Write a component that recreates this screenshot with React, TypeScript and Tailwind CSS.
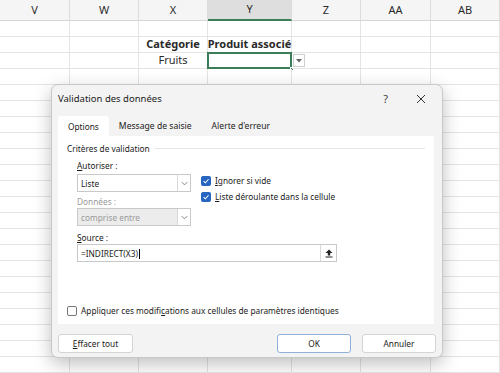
import React from 'react'

const cols = [
  { name: 'V', w: 'w-[70px]' },
  { name: 'W', w: 'w-[69px]' },
  { name: 'X', w: 'w-[69px]' },
  { name: 'Y', w: 'w-[84px]' },
  { name: 'Z', w: 'w-[69px]' },
  { name: 'AA', w: 'w-[70px]' },
  { name: 'AB', w: 'w-[69px]' },
]

function Chevron() {
  return (
    <svg width="9" height="9" viewBox="0 0 10 10" className="text-[#777]">
      <path d="M2 3.5 L5 6.5 L8 3.5" fill="none" stroke="currentColor" strokeWidth="1" />
    </svg>
  )
}

function Check() {
  return (
    <span className="flex h-[10px] w-[10px] shrink-0 items-center justify-center rounded-[2px] bg-[#2766c0]">
      <svg width="8" height="8" viewBox="0 0 10 10">
        <path d="M2 5.2 L4.2 7.3 L8.2 2.8" fill="none" stroke="white" strokeWidth="1.3" />
      </svg>
    </span>
  )
}

function Sheet() {
  const rows = Array.from({ length: 22 })
  return (
    <div className="flex flex-col bg-white text-[11px] text-[#2a2a2a]">
      {/* column headers */}
      <div className="flex h-[21px] bg-[#f5f5f5]">
        {cols.map((c) => (
          <div
            key={c.name}
            className={`${c.w} flex shrink-0 items-center justify-center border-r border-[#dcdcdc] ${
              c.name === 'Y' ? 'border-b-2 border-b-[#3b7d57] bg-[#dedede]' : 'border-b border-b-[#d6d6d6]'
            }`}
          >
            {c.name}
          </div>
        ))}
      </div>
      {rows.map((_, r) => (
        <div key={r} className="flex h-[16px]">
          {cols.map((c) => {
            const sel = r === 2 && c.name === 'Y'
            let content: React.ReactNode = null
            if (r === 1 && c.name === 'X') content = <span className="font-bold">Catégorie</span>
            if (r === 1 && c.name === 'Y') content = <span className="whitespace-nowrap font-bold">Produit associé</span>
            if (r === 2 && c.name === 'X') content = <span>Fruits</span>
            return (
              <div
                key={c.name}
                className={`${c.w} relative flex shrink-0 items-center justify-center border-r border-b border-[#e4e4e4]`}
              >
                {content}
                {sel && (
                  <>
                    <span className="absolute -left-[1px] -top-[1px] bottom-[-1px] right-[-1px] border-2 border-[#3b7d57]" />
                    <span className="absolute -bottom-[3px] -right-[3px] h-[4px] w-[4px] border border-white bg-[#3b7d57]" />
                    <span className="absolute -right-[14px] top-[1px] flex h-[13px] w-[12px] items-center justify-center border border-[#cfcfcf] bg-white">
                      <svg width="6" height="4" viewBox="0 0 6 4">
                        <path d="M0 0 L6 0 L3 3.5 Z" fill="#666" />
                      </svg>
                    </span>
                  </>
                )}
              </div>
            )
          })}
        </div>
      ))}
    </div>
  )
}

function Dialog() {
  return (
    <div className="absolute left-[51px] top-[84px] flex h-[274px] w-[392px] flex-col rounded-[7px] border border-[#c8c8c8] bg-[#f3f3f3] font-['Noto_Sans',sans-serif] text-[8.3px] leading-[13px] text-[#1b1b1b] shadow-[0_6px_18px_rgba(0,0,0,0.25)]">
      {/* title bar */}
      <div className="flex h-[27px] items-center pl-[6px] pr-[16px]">
        <span className="text-[9.5px]">Validation des données</span>
        <span className="ml-auto mr-[28px] text-[11px] text-[#444]">?</span>
        <svg width="10" height="10" viewBox="0 0 10 10">
          <path d="M1 1 L9 9 M9 1 L1 9" stroke="#333" strokeWidth="1" />
        </svg>
      </div>

      {/* tabs */}
      <div className="flex h-[24px] items-end pl-[6px]">
        <div className="flex h-[20px] items-center rounded-t-[3px] bg-white px-[10px]">Options</div>
        <div className="flex h-[20px] items-center px-[10px] text-[8.6px]">Message de saisie</div>
        <div className="flex h-[20px] items-center px-[10px] text-[8.6px]">Alerte d'erreur</div>
      </div>

      {/* panel */}
      <div className="ml-[6px] mr-[8px] flex h-[188px] flex-col bg-white px-[9px] pt-[6px]">
        <div className="flex items-center gap-[4px]">
          <span>Critères de validation</span>
          <span className="h-px flex-1 bg-[#e6e6e6]" />
        </div>

        <div className="mt-[4px] flex pl-[10px]">
          <div className="flex w-[114px] flex-col">
            <span><u>A</u>utoriser :</span>
            <div className="mt-[2px] flex h-[18px] items-center border border-[#c9c9c9] bg-white">
              <span className="flex-1 pl-[3px]">Liste</span>
              <span className="flex h-full w-[13px] items-center justify-center border-l border-[#d8d8d8]">
                <Chevron />
              </span>
            </div>
            <span className="mt-[3px] text-[#9a9a9a]">Données :</span>
            <div className="flex h-[18px] items-center border border-[#c9c9c9] bg-[#ececec] text-[#9a9a9a]">
              <span className="flex-1 pl-[3px]">comprise entre</span>
              <span className="flex h-full w-[13px] items-center justify-center border-l border-[#d8d8d8] bg-white">
                <Chevron />
              </span>
            </div>
          </div>
          <div className="ml-[10px] flex flex-col gap-[3px] pt-[15px]">
            <div className="flex items-center gap-[4px]">
              <Check />
              <span><u>I</u>gnorer si vide</span>
            </div>
            <div className="flex items-center gap-[4px]">
              <Check />
              <span><u>L</u>iste déroulante dans la cellule</span>
            </div>
          </div>
        </div>

        <div className="mt-[5px] flex flex-col pl-[10px]">
          <span><u>S</u>ource :</span>
          <div className="flex h-[18px] w-[260px] items-center border border-[#c9c9c9] bg-white">
            <span className="flex-1 pl-[3px]">=INDIRECT(X3)<span className="ml-px inline-block h-[10px] w-px bg-black align-middle" /></span>
            <span className="flex h-full w-[16px] items-center justify-center border-l border-[#d8d8d8]">
              <svg width="8" height="9" viewBox="0 0 8 9">
                <path d="M4 0.5 L7.5 4 L5.2 4 L5.2 6.5 L2.8 6.5 L2.8 4 L0.5 4 Z M0.5 7.6 L7.5 7.6 L7.5 8.6 L0.5 8.6 Z" fill="#222" />
              </svg>
            </span>
          </div>
        </div>

        <div className="mt-auto mb-[7px] flex items-center gap-[4px]">
          <span className="h-[10px] w-[10px] rounded-[2px] border border-[#777] bg-white" />
          <span>Appliquer ces modifi<u>c</u>ations aux cellules de paramètres identiques</span>
        </div>
      </div>

      {/* buttons */}
      <div className="mt-[10px] flex px-[6px]">
        <button className="flex h-[19px] w-[75px] items-center justify-center rounded-[3px] border border-[#d4d4d4] bg-white">
          <u>E</u>ffacer tout
        </button>
        <button className="ml-auto flex h-[19px] w-[74px] items-center justify-center rounded-[3px] border border-[#8fb0d8] bg-white">
          OK
        </button>
        <button className="ml-[11px] flex h-[19px] w-[74px] items-center justify-center rounded-[3px] border border-[#d4d4d4] bg-white">
          Annuler
        </button>
      </div>
    </div>
  )
}

export default function App() {
  return (
    <div className="relative h-[373px] w-[500px] overflow-hidden bg-white font-['Noto_Sans',sans-serif]">
      <Sheet />
      <Dialog />
    </div>
  )
}
